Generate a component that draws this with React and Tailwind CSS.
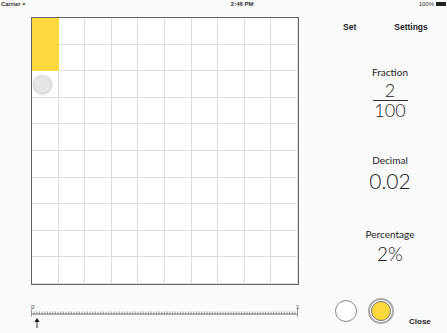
import React from 'react';

const Ruler = () => {
  const ticks = [];
  for (let i = 0; i <= 100; i++) {
    const x = 0.5 + (i * 266) / 100;
    const h = i === 0 || i === 100 ? 8 : 3;
    ticks.push(<line key={i} x1={x} x2={x} y1={10 - h / 2 - 1} y2={10 + h / 2 - 1} stroke="#666" strokeWidth="0.6" />);
  }
  return (
    <svg width="272" height="24" viewBox="0 0 272 24" className="block">
      <text x="0" y="5" fontSize="6" fill="#444" fontFamily="Liberation Sans, sans-serif">0</text>
      <text x="265" y="5" fontSize="6" fill="#444" fontFamily="Liberation Sans, sans-serif">1</text>
      <line x1="0.5" x2="266.5" y1="10" y2="10" stroke="#555" strokeWidth="0.8" />
      {ticks}
      <path d="M6 14 L3.5 18 L8.5 18 Z" fill="#111" />
      <line x1="6" x2="6" y1="17" y2="24" stroke="#222" strokeWidth="0.9" />
    </svg>
  );
};

const Grid = () => {
  const cells = [];
  for (let r = 0; r < 10; r++) {
    for (let c = 0; c < 10; c++) {
      const yellow = c === 0 && r < 2;
      cells.push(
        <div
          key={`${r}-${c}`}
          className={yellow ? 'bg-[#fdd93e]' : 'border-r border-b border-[#dcdcdc]'}
        />
      );
    }
  }
  return (
    <div className="relative w-[268px] h-[268px] border border-[#666] bg-white">
      <div className="grid grid-cols-10 grid-rows-10 w-full h-full">{cells}</div>
      <div className="absolute left-[1px] top-[57px] w-[19px] h-[19px] rounded-full bg-[#e6e6e6] border border-[#d4d4d4] shadow-sm" />
    </div>
  );
};

export default function App() {
  return (
    <div className="w-[447px] h-[333px] bg-[#fafafa] overflow-hidden relative" style={{ fontFamily: 'Lato, "Open Sans", sans-serif' }}>
      <div className="h-[8px] flex items-center justify-between px-[1px] text-[6px] text-[#333] font-['Liberation_Sans',sans-serif]">
        <span className="font-bold">Carrier ≈</span>
        <span className="font-bold ml-[40px]">2:46 PM</span>
        <span className="flex items-center gap-[2px]">100% <span className="inline-block w-[10px] h-[4px] bg-[#222]" /></span>
      </div>
      <div className="flex">
        <div className="pl-[31px] pt-[9px]">
          <Grid />
          <div className="mt-[19px]">
            <Ruler />
          </div>
        </div>
        <div className="flex-1 flex flex-col">
          <div className="flex text-[8.5px] font-bold text-[#222] font-['Liberation_Sans',sans-serif] mt-[13px]">
            <span className="ml-[40px]">Set</span>
            <span className="ml-[38px]">Settings</span>
          </div>
          <div className="flex flex-col items-center ml-[28px] w-[118px] text-[#222]">
            <div className="text-[10px] mt-[33px] leading-none">Fraction</div>
            <div className="text-[18px] font-light leading-[16px] mt-[5px]">2</div>
            <div className="w-[35px] h-[1px] bg-[#333] mt-[2px]" />
            <div className="text-[18px] font-light leading-[16px] mt-[1px]">100</div>
            <div className="text-[10px] mt-[37px] leading-none">Decimal</div>
            <div className="text-[21px] font-light leading-[20px] mt-[6px]">0.02</div>
            <div className="text-[10px] mt-[38px] leading-none">Percentage</div>
            <div className="text-[19px] font-light leading-[18px] mt-[6px]">2%</div>
          </div>
          <div className="flex items-end mt-[35px] ml-[32px]">
            <div className="w-[22px] h-[22px] rounded-full border border-[#888] bg-white mb-[2px]" />
            <div className="ml-[11px] w-[26px] h-[26px] rounded-full border-[2px] border-[#aaa] p-[1px]">
              <div className="w-full h-full rounded-full bg-[#fdd93e] border border-[#777]" />
            </div>
            <span className="ml-[15px] text-[8px] font-bold text-[#222] font-['Liberation_Sans',sans-serif] -mb-[4px]">Close</span>
          </div>
        </div>
      </div>
    </div>
  );
}
